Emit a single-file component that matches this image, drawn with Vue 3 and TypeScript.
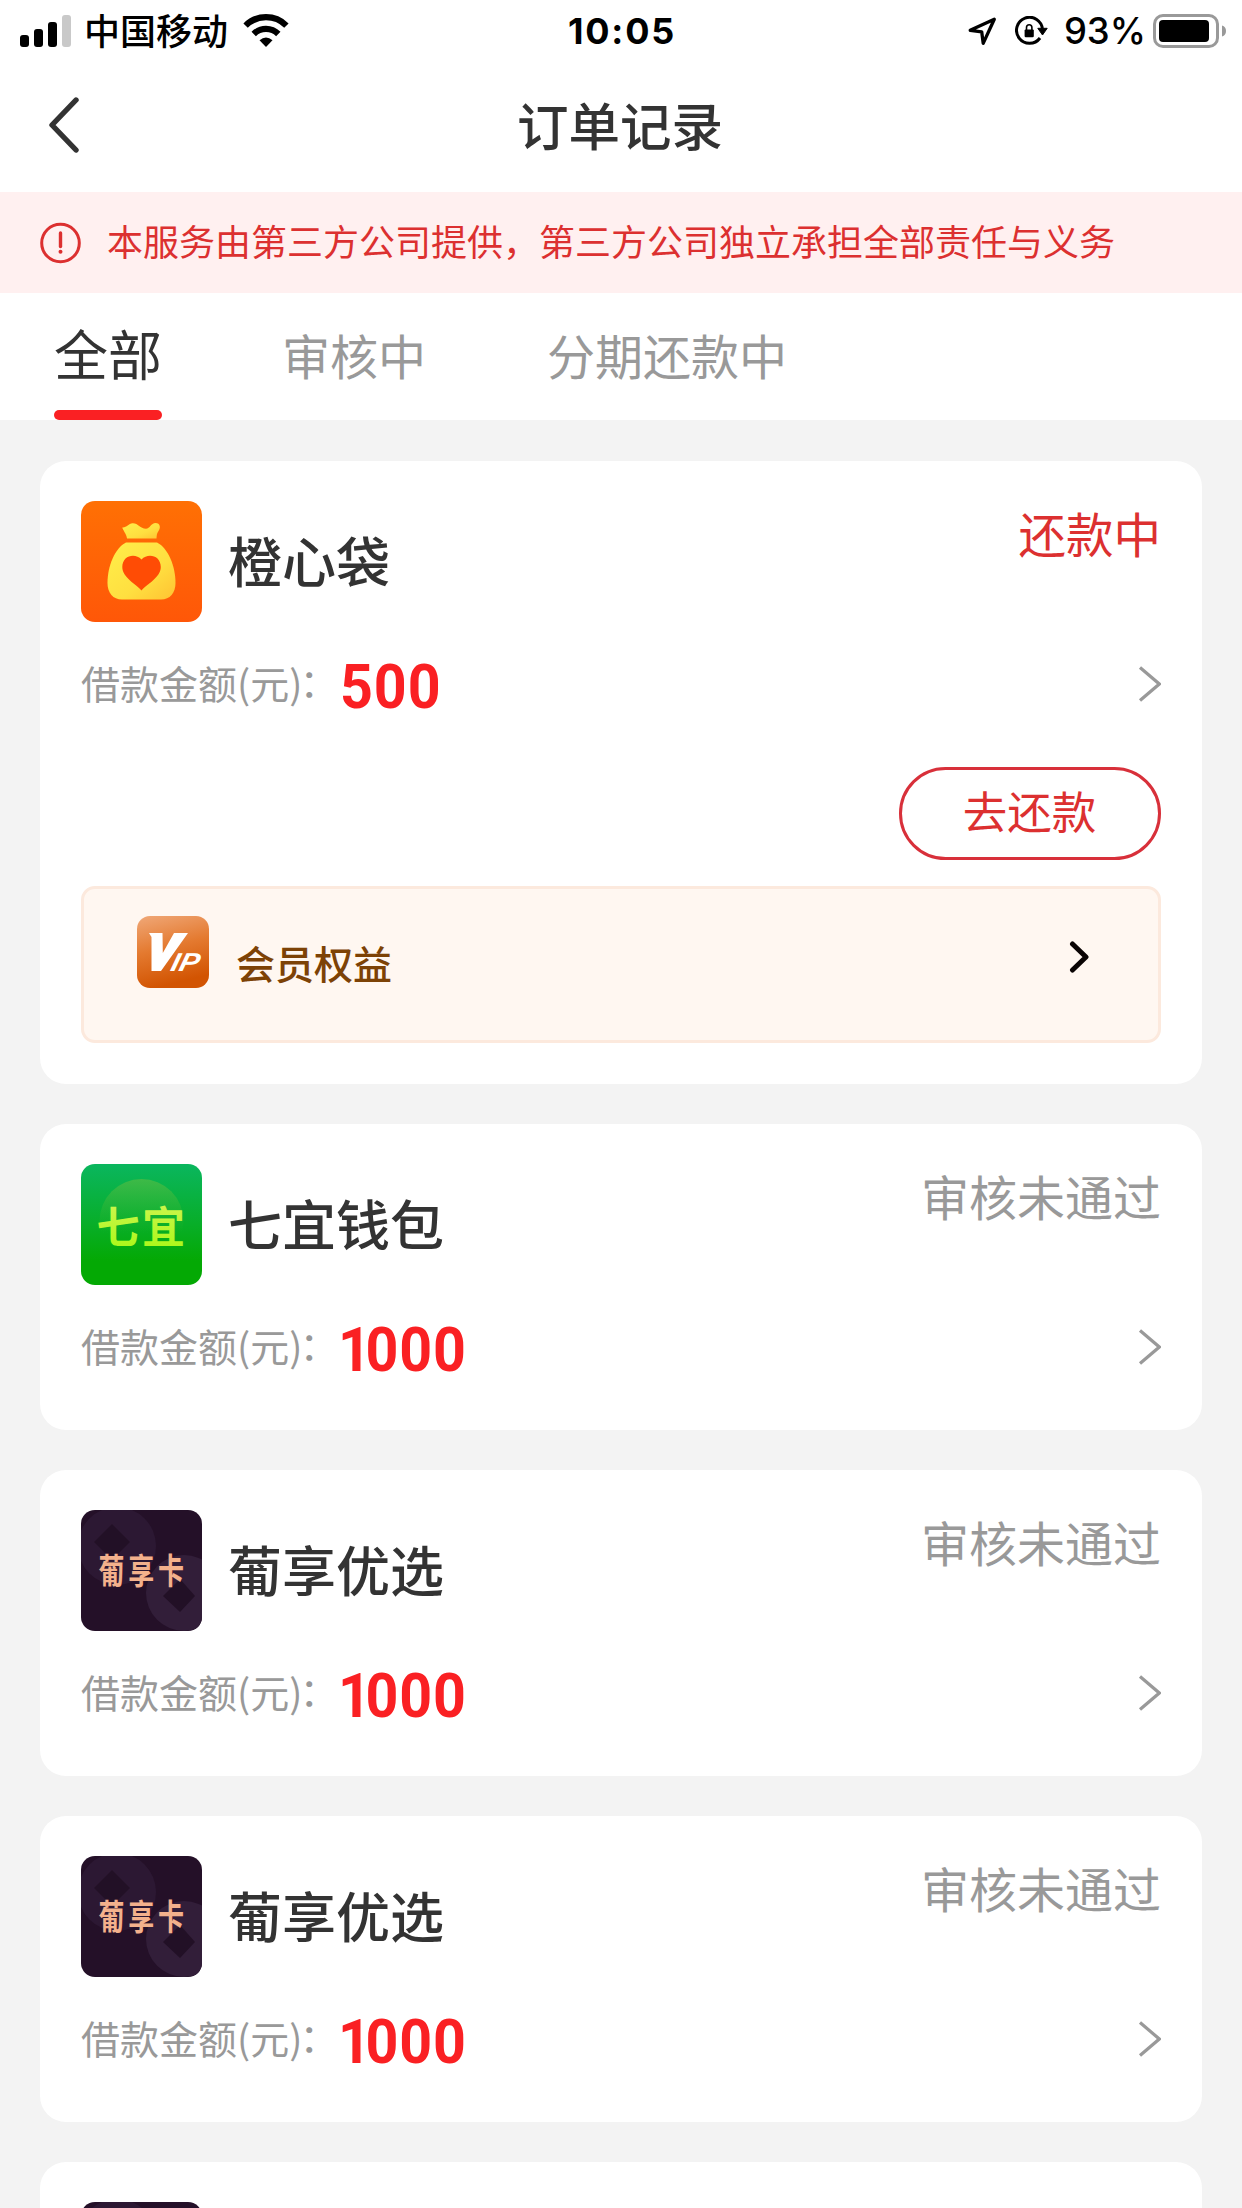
<script setup lang="ts">
type LogoKind = 'bag' | 'qiyi' | 'puxiang'

interface Order {
  id: number
  logo: LogoKind
  name?: string
  status?: string
  amount?: number
  active: boolean
}

const tabs: string[] = ['全部', '审核中', '分期还款中']

const orders: Order[] = [
  { id: 1, logo: 'bag', name: '橙心袋', status: '还款中', amount: 500, active: true },
  { id: 2, logo: 'qiyi', name: '七宜钱包', status: '审核未通过', amount: 1000, active: false },
  { id: 3, logo: 'puxiang', name: '葡享优选', status: '审核未通过', amount: 1000, active: false },
  { id: 4, logo: 'puxiang', name: '葡享优选', status: '审核未通过', amount: 1000, active: false },
  { id: 5, logo: 'puxiang', active: false },
]

const startsWithOne = (amount: number): boolean => String(amount).startsWith('1')
</script>

<template>
  <div class="screen">
    <div class="status-bar">
      <div class="status-left">
        <svg class="signal" width="52" height="32" viewBox="0 0 52 32">
          <rect x="0" y="20" width="9" height="12" rx="3" />
          <rect x="14" y="14" width="9" height="18" rx="3" />
          <rect x="28" y="7" width="9" height="25" rx="3" />
          <rect x="42" y="0" width="9" height="32" rx="3" fill="#c9c9c9" />
        </svg>
        <span class="carrier">中国移动</span>
        <svg class="wifi" width="46" height="34" viewBox="0 0 46 34">
          <g fill="none" stroke="#000" stroke-width="6.2">
            <path d="M2.6 11.6a29 29 0 0 1 40.8 0" />
            <path d="M10.7 20a17.400 17.400 0 0 1 24.600 0" />
          </g>
          <path d="M16.500 26.200Q23 20.800 29.500 26.200L23 33Z" />
        </svg>
      </div>
      <span class="time">10:05</span>
      <div class="status-right">
        <svg width="29" height="29" viewBox="0 0 29 29">
          <path d="M26.300 2.200 2.200 13.300 13.700 14.800 15.200 26.400Z" fill="none" stroke="#000" stroke-width="3.300" stroke-linejoin="round" />
        </svg>
        <svg class="lock" width="34" height="30" viewBox="0 0 34 30">
          <path d="M27.500 13.500A13 13 0 1 0 25 22" fill="none" stroke="#000" stroke-width="3" />
          <path d="M22.800 12.300H32.200L27.500 19Z" stroke="#000" stroke-linejoin="round" />
          <rect x="9.600" y="13.400" width="9.200" height="7.800" rx="1.200" />
          <path d="M11.500 14v-2.600a2.700 2.700 0 0 1 5.400 0v2.600" fill="none" stroke="#000" stroke-width="1.600" />
        </svg>
        <span class="percent">93%</span>
        <svg width="74" height="34" viewBox="0 0 74 34">
          <rect x="1.500" y="1.500" width="63" height="31" rx="8.500" fill="none" stroke="#999" stroke-width="3" />
          <rect x="6" y="6" width="50" height="22" rx="4" />
          <path d="M69 11.500q4 1.300 4 5.500t-4 5.500z" fill="#999" />
        </svg>
      </div>
    </div>

    <header class="nav">
      <svg class="back" width="32" height="58" viewBox="0 0 32 58">
        <path d="M29 4 5 29 29 54" fill="none" stroke="#333" stroke-width="5.400" stroke-linecap="round" stroke-linejoin="round" />
      </svg>
      <h1>订单记录</h1>
    </header>

    <div class="notice">
      <svg width="42" height="42" viewBox="0 0 42 42">
        <circle cx="21.500" cy="21" r="18.800" fill="none" stroke="#dc3030" stroke-width="3" />
        <path d="M21.500 11v13.500" stroke="#dc3030" stroke-width="3.400" stroke-linecap="round" />
        <circle cx="21.500" cy="29.700" r="2" fill="#dc3030" />
      </svg>
      <span>本服务由第三方公司提供，第三方公司独立承担全部责任与义务</span>
    </div>

    <nav class="tabs">
      <span v-for="(tab, i) in tabs" :key="tab" class="tab" :class="{ current: i === 0 }">{{ tab }}</span>
    </nav>

    <main class="list">
      <section v-for="order in orders" :key="order.id" class="card">
        <div class="card-head">
          <svg v-if="order.logo === 'bag'" class="logo" viewBox="0 0 121 121">
            <defs>
              <linearGradient id="bagBg" x1="0" y1="0" x2="0" y2="1">
                <stop offset="0" stop-color="#ff7004" />
                <stop offset="1" stop-color="#ff5708" />
              </linearGradient>
              <linearGradient id="bagFill" x1="0" y1="0" x2="1" y2="1">
                <stop offset="0" stop-color="#ffef4a" />
                <stop offset=".6" stop-color="#ffdf40" />
                <stop offset="1" stop-color="#ffc232" />
              </linearGradient>
            </defs>
            <rect width="121" height="121" fill="url(#bagBg)" />
            <path d="M46 37.500C45.500 33 42 29.500 41.300 26.500C45.500 27 47.500 22.500 51.500 22.300C57 22 59 27.700 65 27.700C69 27.700 70 22 74.500 22C79.500 22 79.800 27 77.500 30C75.500 32.500 75.800 35 75.500 37.500Z" fill="url(#bagFill)" />
            <path d="M45 41.500H76C87 47 94.500 65 94.500 82C94.500 92 89 98.500 80 98.500H41C32 98.500 26.500 92 26.500 82C26.500 65 34 47 45 41.500Z" fill="url(#bagFill)" />
            <path d="M60.500 89.500C55 83 41.300 76.500 41.300 66C41.300 54.500 54 51.500 60.500 58.500C67 51.500 79.800 54.500 79.800 66C79.800 76.500 66 83 60.500 89.500Z" fill="#ff4c05" />
          </svg>
          <svg v-else-if="order.logo === 'qiyi'" class="logo" viewBox="0 0 121 121">
            <defs>
              <linearGradient id="qiyiBg" x1="0" y1="0" x2="0" y2="1">
                <stop offset="0" stop-color="#0ab65e" />
                <stop offset=".5" stop-color="#08ae28" />
                <stop offset=".8" stop-color="#04a904" />
                <stop offset="1" stop-color="#04a904" />
              </linearGradient>
              <linearGradient id="qiyiGlow" x1="0" y1="0" x2="0" y2="1">
                <stop offset="0" stop-color="#4cbb45" stop-opacity=".8" />
                <stop offset=".65" stop-color="#2fb52b" stop-opacity="0" />
              </linearGradient>
              <linearGradient id="qiyiText" x1="0" y1="0" x2="0" y2="1">
                <stop offset="0" stop-color="#d5f45a" />
                <stop offset="1" stop-color="#a6f812" />
              </linearGradient>
            </defs>
            <rect width="121" height="121" fill="url(#qiyiBg)" />
            <circle cx="60.500" cy="57" r="42" fill="url(#qiyiGlow)" />
            <text class="mark" x="15.500" y="78.500" font-size="43" font-weight="700" letter-spacing="2.500" fill="url(#qiyiText)">七宜</text>
          </svg>
          <svg v-else class="logo" viewBox="0 0 121 121">
            <rect width="121" height="121" fill="#241028" />
            <circle cx="36" cy="36" r="39" fill="#2c1833" />
            <path d="M31 14 49 32 31 50 13 32Z" fill="#221026" />
            <circle cx="103" cy="83" r="38" fill="#321e39" />
            <path d="M99 69 114 86 99 102 82 86Z" fill="#221026" />
            <text v-if="order.name" class="mark" transform="translate(17.500 73.500) scale(1 1.350)" font-size="26" font-weight="700" letter-spacing="3.800" fill="#f3b18c">葡享卡</text>
          </svg>
          <span v-if="order.name" class="name">{{ order.name }}</span>
          <span v-if="order.status" class="state" :class="{ active: order.active }">{{ order.status }}</span>
        </div>

        <div v-if="order.amount" class="amount-row">
          <span class="label">借款金额(元)<span class="colon">：</span></span>
          <span class="amount" :class="{ lead: startsWithOne(order.amount) }">{{ order.amount }}</span>
          <svg class="chevron" width="23" height="36" viewBox="0 0 23 36">
            <path d="M2 1.500 21.300 18 2 34.500" fill="none" stroke="#999" stroke-width="3.200" />
          </svg>
        </div>

        <template v-if="order.active">
          <button class="repay" type="button">去还款</button>
          <div class="vip">
            <svg class="vip-icon" viewBox="0 0 72 72">
              <defs>
                <linearGradient id="vipBg" x1="0" y1="0" x2=".25" y2="1">
                  <stop offset="0" stop-color="#f0a878" />
                  <stop offset=".5" stop-color="#e47a30" />
                  <stop offset="1" stop-color="#d25402" />
                </linearGradient>
              </defs>
              <rect width="72" height="72" rx="13" fill="url(#vipBg)" />
              <path d="M12 17H25.500L25.800 37 37 17H51L24 55H14.500L14.500 21Z" fill="#fff" />
              <text class="ip" transform="translate(32.500 55.300) skewX(-14)" font-size="26" fill="#fff" textLength="28" lengthAdjust="spacingAndGlyphs">IP</text>
            </svg>
            <span>会员权益</span>
            <svg class="vip-arrow" width="20" height="32" viewBox="0 0 20 32">
              <path d="M3.500 3 17 16 3.500 29" fill="none" stroke="#0a0404" stroke-width="5" stroke-linecap="round" stroke-linejoin="round" />
            </svg>
          </div>
        </template>
      </section>
    </main>
  </div>
</template>

<style>
body {
  margin: 0;
  background: #f3f3f3;
}
</style>

<style scoped>
.screen {
  display: flex;
  flex-direction: column;
  width: 1242px;
  height: 2208px;
  overflow: hidden;
  background: #f3f3f3;
  color: #333;
  font-family: "Noto Sans CJK SC", sans-serif;
}

.screen svg {
  display: block;
  flex: none;
}

.status-bar {
  display: grid;
  grid-template-columns: 1fr auto 1fr;
  align-items: center;
  flex: none;
  height: 62px;
  padding: 0 16px 0 20px;
  background: #fff;
  color: #000;
}

.status-left,
.status-right {
  display: flex;
  align-items: center;
}

.status-right {
  justify-content: flex-end;
  margin-right: -1px;
}

.signal {
  margin-right: 12px;
}

.carrier {
  margin-right: 15px;
  padding-bottom: 3px;
  font-size: 36px;
  font-weight: 500;
  line-height: 57px;
}

.time {
  padding-right: 2px;
  font-family: Inter, sans-serif;
  font-size: 36px;
  font-weight: 700;
  letter-spacing: 1.8px;
}

.lock {
  margin-left: 18px;
}

.percent {
  margin: 0 7px 0 15px;
  font-family: Inter, sans-serif;
  font-size: 36.5px;
  font-weight: 500;
}

.nav {
  display: grid;
  grid-template-columns: 1fr auto 1fr;
  align-items: center;
  flex: none;
  height: 130px;
  padding: 0 47px 4px;
  box-sizing: border-box;
  background: #fff;
}

.nav h1 {
  margin: 0;
  padding: 0 2px 2px 0;
  font-size: 51.5px;
  font-weight: 500;
  line-height: 70px;
}

.notice {
  display: flex;
  align-items: center;
  flex: none;
  gap: 26px;
  height: 101px;
  padding-left: 39px;
  background: #fff0f0;
  color: #dc3030;
  font-size: 36px;
  white-space: nowrap;
}

.notice span {
  padding-bottom: 6px;
}

.tabs {
  display: flex;
  align-items: stretch;
  flex: none;
  gap: 121px;
  height: 127px;
  padding-left: 54px;
  background: #fff;
}

.tab {
  box-sizing: border-box;
  margin-left: -1px;
  margin-right: 1px;
  color: #999;
  font-size: 48px;
  line-height: 122px;
}

.current {
  display: flex;
  flex-direction: column;
  justify-content: space-between;
  margin: 0;
  padding-top: 2px;
  color: #333;
  font-size: 54px;
  line-height: 115px;
}

.current::after {
  content: "";
  height: 10px;
  border-radius: 5px;
  background: #fa2023;
}

.list {
  display: flex;
  flex-direction: column;
  gap: 40px;
  padding: 41px 40px 0;
}

.card {
  display: flex;
  flex-direction: column;
  flex: none;
  padding: 40px 41px;
  border-radius: 26px;
  background: #fff;
}

.card-head {
  display: flex;
  align-items: center;
  height: 121px;
}

.logo {
  width: 121px;
  height: 121px;
  margin-right: 26px;
  border-radius: 14px;
}

.mark {
  font-family: "Noto Sans CJK SC", sans-serif;
}

.name {
  padding-bottom: 4px;
  font-size: 54px;
  font-weight: 500;
  line-height: 80px;
}

.state {
  align-self: flex-start;
  margin-left: auto;
  color: #999;
  font-size: 48px;
  line-height: 62px;
}

.state.active {
  color: #dc3030;
  font-size: 47.500px;
  line-height: 64px;
}

.amount-row {
  display: flex;
  align-items: center;
  height: 60px;
  margin-top: 33px;
  padding-bottom: 12px;
}

.label {
  width: 259px;
  padding-bottom: 6px;
  color: #999;
  font-size: 39px;
  line-height: 60px;
  white-space: nowrap;
}

.colon {
  margin-left: -3px;
  line-height: 1;
  vertical-align: 2px;
}

.amount {
  padding-top: 3px;
  color: #fa2023;
  font-family: Roboto, sans-serif;
  font-size: 61px;
  font-weight: 700;
  letter-spacing: 1px;
  line-height: 60px;
  transform: scaleX(0.94);
  transform-origin: left;
}

.amount.lead::first-letter {
  margin-left: -2px;
  margin-right: -7px;
}

.chevron {
  margin: 0 0 2px auto;
}

.repay {
  align-self: flex-end;
  width: 262px;
  height: 93px;
  margin-top: 40px;
  padding: 0 1px 8px 0;
  border: 3px solid #d8303a;
  border-radius: 47px;
  background: #fff;
  color: #dc3030;
  font-family: inherit;
  font-size: 44.500px;
  line-height: 60px;
}

.vip {
  display: flex;
  align-items: flex-start;
  height: 157px;
  margin: 26px 0 1px;
  padding: 27px 69px 0 53px;
  box-sizing: border-box;
  border: 3px solid #fce9dd;
  border-radius: 14px;
  background: #fff7f1;
  color: #7d4206;
  font-size: 39px;
  font-weight: 500;
  line-height: 92px;
}

.vip-icon {
  width: 72px;
  height: 72px;
  margin-right: 27px;
}

.ip {
  font-family: "Liberation Sans", sans-serif;
  font-style: italic;
  font-weight: 700;
}

.vip-arrow {
  margin: 25px 0 0 auto;
}
</style>
